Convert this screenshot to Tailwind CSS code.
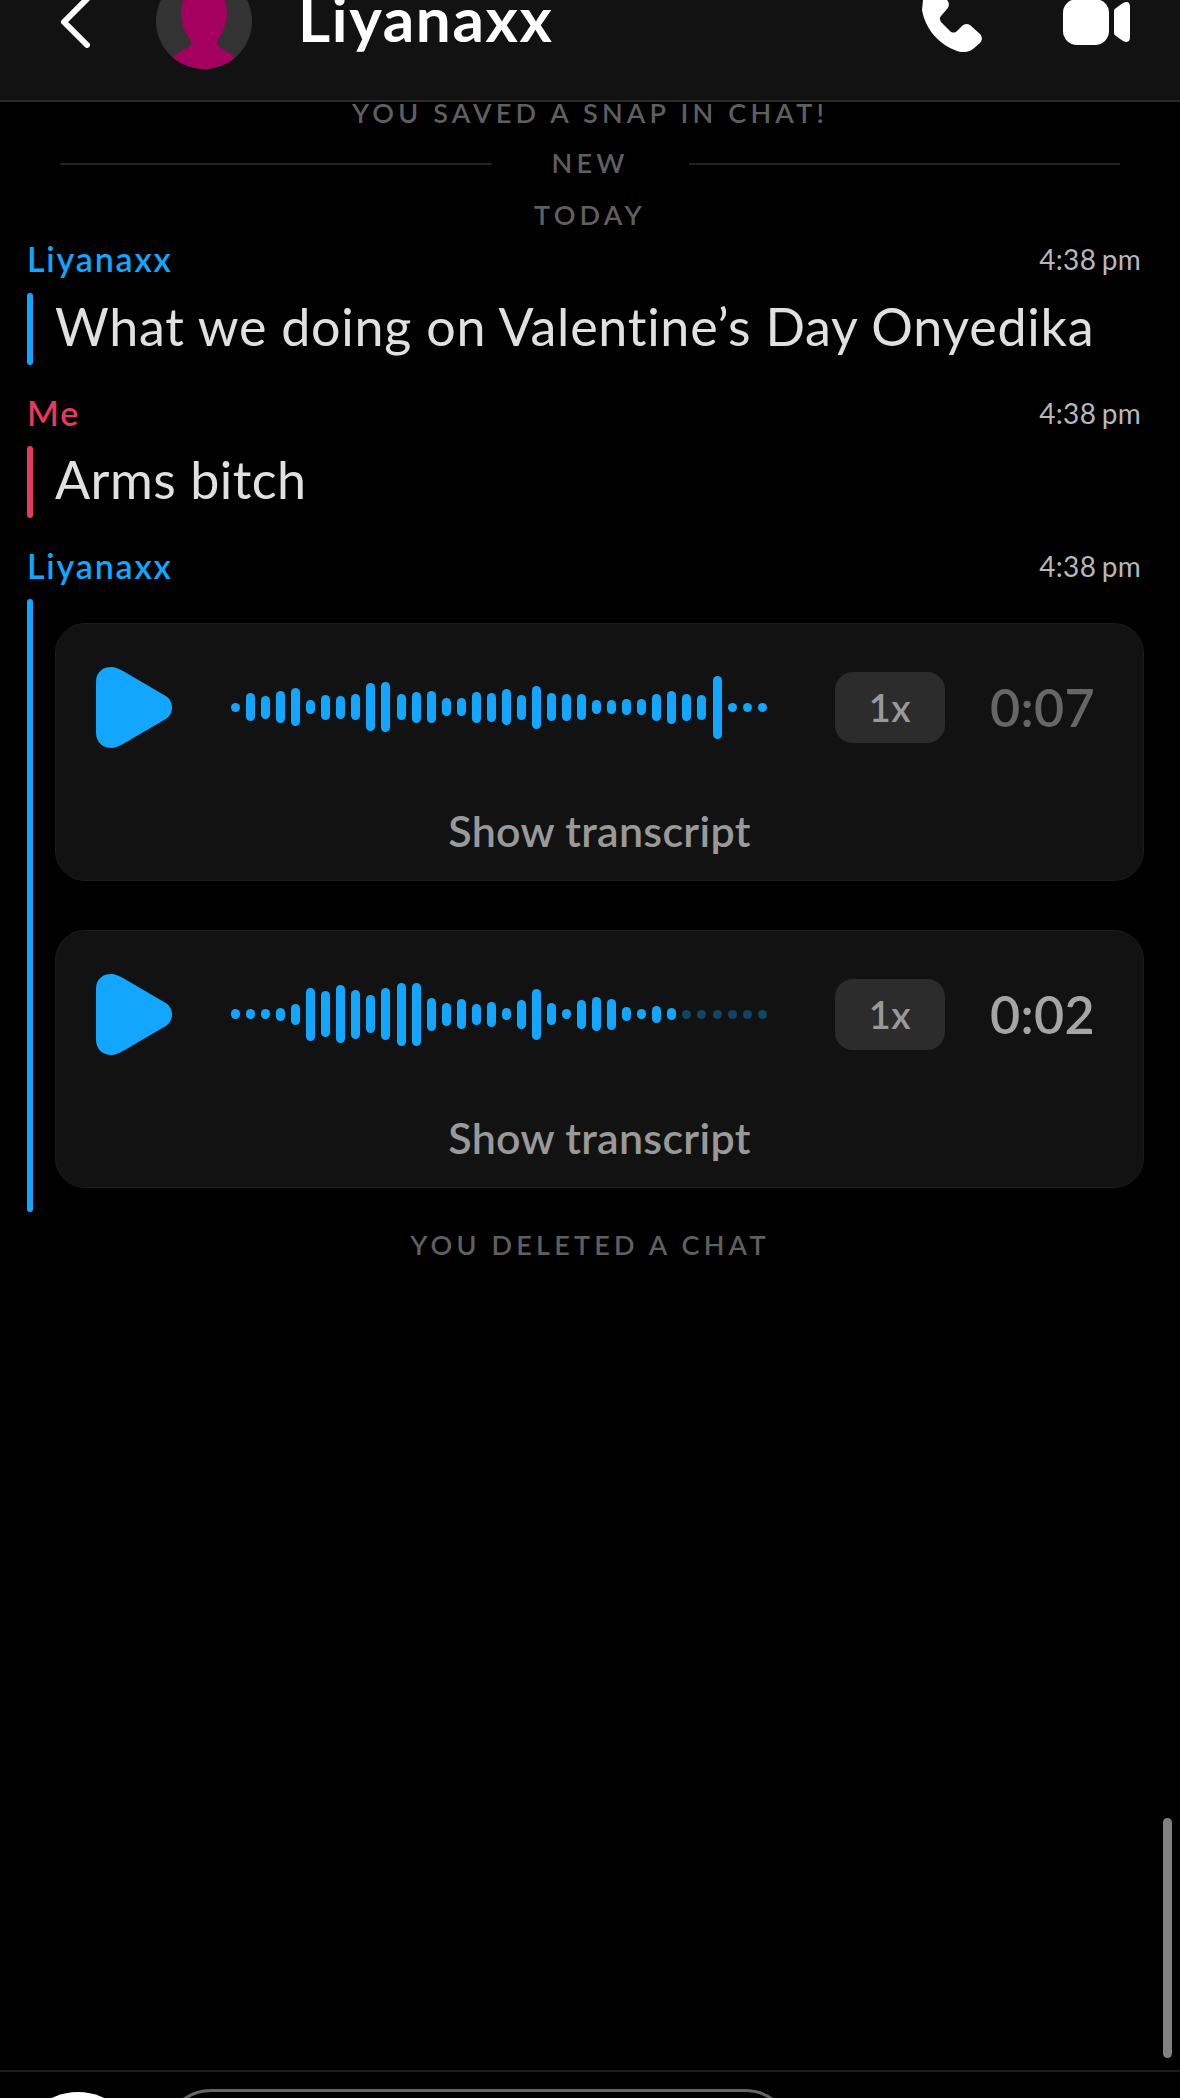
<!DOCTYPE html>
<html lang="en">

<head>
  <meta charset="UTF-8">
  <meta name="viewport" content="width=device-width, initial-scale=1.0">
  <title>Chat</title>
  <script src="https://cdn.jsdelivr.net/npm/@tailwindcss/browser@4"></script>
</head>

<body class="bg-black font-['Lato',sans-serif]">
  <div class="relative w-[1180px] h-[2098px] overflow-hidden bg-black">

    <header class="h-[102px] overflow-hidden bg-[#121212] border-b-2 border-[#2a2a2a]">
      <div class="-mt-[27px] h-[96px] flex items-center pl-[60px] pr-[50px]">
        <svg class="w-[30px] h-[52px] mr-[66px] mt-[2px] shrink-0" viewBox="0 0 30 52" fill="none" stroke="#fff" stroke-width="6" stroke-linecap="round" stroke-linejoin="round">
          <path d="M27 3 L4 26 L27 49" />
        </svg>
        <div class="relative w-[96px] h-[96px] shrink-0 rounded-full bg-[#333] overflow-hidden">
          <svg class="absolute inset-0" viewBox="0 0 96 96" fill="#a3005f">
            <path d="M48 8 C60 8 70 20 71 40 C71 52 66 62 61 68 L61 72 C66 76 76 80 80 86 L78 96 H18 L16 86 C20 80 30 76 35 72 L35 68 C30 62 25 52 25 40 C26 20 36 8 48 8 Z" />
          </svg>
        </div>
        <h1 class="ml-[46px] mb-[6px] text-[62px] font-bold tracking-[1.6px] text-white leading-none">Liyanaxx</h1>
        <svg class="ml-auto w-[60px] h-[52px] mt-[10px] shrink-0" viewBox="0 0 60 52" fill="#fff">
          <path d="M1 0 L25 0 C28 3 27 7 25 9 L19 16 C17 18 18 20 19 22 L28 31 C30 33 33 33 35 31 L40 26 C42 24 45 23 48 25 L58 34 C61 37 60 41 58 43 L51 49 C47 52 41 53 35 51 C16 44 3 28 0 10 Z" />
        </svg>
        <svg class="ml-[81px] w-[67px] h-[46px] mt-[2px] shrink-0" viewBox="0 0 67 46" fill="#fff">
          <rect x="0" y="0" width="46" height="46" rx="14" />
          <path d="M51 12 Q51 10 53 9 L60 4 Q67 1 67 8 V38 Q67 45 60 42 L53 37 Q51 36 51 34 Z" />
        </svg>
      </div>
    </header>

    <main class="flex flex-col">
      <p class="-mt-[1px] h-[24px] flex items-center justify-center text-[27px] font-semibold tracking-[4.2px] text-[#5f5f5f]">YOU SAVED A SNAP IN CHAT!</p>
      <div class="mt-[27px] h-[24px] flex items-center justify-center px-[60px]">
        <div class="flex-1 h-[2px] bg-[#222]"></div>
        <span class="w-[197px] pb-[2px] text-center text-[27px] font-semibold tracking-[4.2px] text-[#5f5f5f]">NEW</span>
        <div class="flex-1 h-[2px] bg-[#222]"></div>
      </div>
      <p class="mt-[27px] h-[24px] flex items-center justify-center text-[27px] font-semibold tracking-[4.2px] text-[#5f5f5f]">TODAY</p>

      <section class="mt-[14px] pl-[27px] pr-[39px]">
        <div class="h-[36px] flex items-center justify-between">
          <span class="pb-[2px] text-[34px] font-semibold tracking-[1.8px] text-[#12a6ff]">Liyanaxx</span>
          <span class="text-[28px] tracking-[0.3px] [word-spacing:-2px] text-[#b8b8b8]">4:38 pm</span>
        </div>
        <div class="mt-[16px] flex items-center gap-[22px] h-[72px]">
          <div class="w-[6px] h-full rounded-full bg-[#12a6ff]"></div>
          <p class="pb-[7px] text-[52px] tracking-[0.75px] text-[#e0e0e0] leading-none">What we doing on Valentine’s Day Onyedika</p>
        </div>

        <div class="mt-[30px] h-[36px] flex items-center justify-between">
          <span class="pb-[2px] text-[34px] font-semibold tracking-[1.8px] text-[#e63a5c]">Me</span>
          <span class="text-[28px] tracking-[0.3px] [word-spacing:-2px] text-[#b8b8b8]">4:38 pm</span>
        </div>
        <div class="mt-[15px] flex items-center gap-[22px] h-[72px]">
          <div class="w-[6px] h-full rounded-full bg-[#e63a5c]"></div>
          <p class="pb-[7px] text-[52px] tracking-[0.5px] text-[#e0e0e0] leading-none">Arms bitch</p>
        </div>

        <div class="mt-[30px] h-[36px] flex items-center justify-between">
          <span class="pb-[2px] text-[34px] font-semibold tracking-[1.8px] text-[#12a6ff]">Liyanaxx</span>
          <span class="text-[28px] tracking-[0.3px] [word-spacing:-2px] text-[#b8b8b8]">4:38 pm</span>
        </div>
        <div class="mt-[15px] flex gap-[22px]">
          <div class="w-[6px] h-[613px] rounded-full bg-[#12a6ff]"></div>
          <div class="flex-1 -mr-[3px] pt-[24px] flex flex-col gap-[49px]">

            <article class="h-[258px] rounded-[30px] bg-[#121212] border border-[#1c1c1c] flex flex-col">
              <div class="h-[166px] flex items-center pl-[40px]">
                <svg class="w-[76px] h-[81px]" viewBox="0 0 76 81" fill="#12a6ff">
                  <path d="M0 15 C0 4 8 0 15 0 C19 0 23 2 27 4 L68 28 C74 31 76 36 76 40.5 C76 45 74 50 68 53 L27 77 C23 79 19 81 15 81 C8 81 0 76 0 66 Z" />
                </svg>
                <div data-wave="0" class="ml-[59px] w-[536px] flex items-center justify-between"></div>
                <span class="ml-[68px] w-[110px] h-[71px] rounded-[18px] bg-[#2c2c2c] flex items-center justify-center text-[38px] font-semibold tracking-[0.5px] text-[#999]">1x</span>
                <span class="ml-[45px] text-[52px] font-semibold tracking-[0.3px] text-[#666] leading-none">0:07</span>
              </div>
              <p class="mt-[17px] h-[48px] flex items-center justify-center text-[43px] font-semibold tracking-[0.3px] text-[#999]">Show transcript</p>
            </article>

            <article class="h-[258px] rounded-[30px] bg-[#121212] border border-[#1c1c1c] flex flex-col">
              <div class="h-[166px] flex items-center pl-[40px]">
                <svg class="w-[76px] h-[81px]" viewBox="0 0 76 81" fill="#12a6ff">
                  <path d="M0 15 C0 4 8 0 15 0 C19 0 23 2 27 4 L68 28 C74 31 76 36 76 40.5 C76 45 74 50 68 53 L27 77 C23 79 19 81 15 81 C8 81 0 76 0 66 Z" />
                </svg>
                <div data-wave="1" class="ml-[59px] w-[536px] flex items-center justify-between"></div>
                <span class="ml-[68px] w-[110px] h-[71px] rounded-[18px] bg-[#2c2c2c] flex items-center justify-center text-[38px] font-semibold tracking-[0.5px] text-[#999]">1x</span>
                <span class="ml-[45px] text-[52px] font-semibold tracking-[0.3px] text-[#a5a5a5] leading-none">0:02</span>
              </div>
              <p class="mt-[17px] h-[48px] flex items-center justify-center text-[43px] font-semibold tracking-[0.3px] text-[#999]">Show transcript</p>
            </article>
          </div>
        </div>
      </section>

      <p class="mt-[21px] h-[24px] flex items-center justify-center text-[27px] font-semibold tracking-[4.2px] text-[#5f5f5f]">YOU DELETED A CHAT</p>
    </main>

    <!-- scrollbar -->
    <div class="absolute left-[1163px] top-[1818px] w-[9px] h-[240px] rounded-full bg-[#808080]"></div>

    <footer class="absolute left-0 right-0 top-[2070px] h-[28px] border-t-2 border-[#1e1e1e]">
      <div class="absolute left-[17px] top-[20px] w-[122px] h-[122px] rounded-full bg-white"></div>
      <div class="absolute left-[163px] top-[17px] w-[630px] h-[100px] rounded-[48px] border-[3px] border-[#666]"></div>
    </footer>
  </div>

  <script>
    // waveform heights in px, one list per voice note
    const waves = [
      [9,28,23,32,38,14,25,23,26,48,50,26,31,32,18,18,31,29,36,25,43,28,27,26,14,14,16,16,27,33,27,25,63,9,9,9],
      [10,10,10,13,21,53,46,58,49,38,52,63,63,33,23,30,21,25,12,29,51,22,10,29,34,31,14,10,17,12,9,9,9,9,9,9]
    ];
    const played = [36, 30];
    document.querySelectorAll('[data-wave]').forEach(box => {
      const i = Number(box.dataset.wave);
      waves[i].forEach((h, n) => {
        const bar = document.createElement('div');
        bar.className = 'w-[9px] rounded-full ' + (n < played[i] ? 'bg-[#12a6ff]' : 'bg-[#12a6ff]/35');
        bar.style.height = h + 'px';
        box.appendChild(bar);
      });
    });
  </script>
</body>

</html>
